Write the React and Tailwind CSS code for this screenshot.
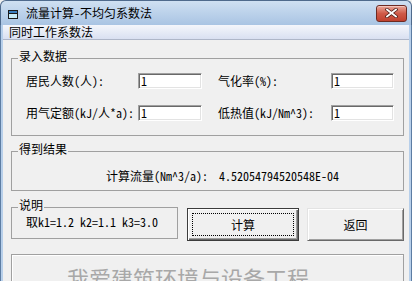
const FONT = "font-['Noto_Sans_Mono_CJK_SC','Noto_Sans_CJK_SC',monospace]"

function Field({ value }) {
  return (
    <div className="h-[16px] bg-white border border-t-[#a0a0a0] border-l-[#a0a0a0] border-b-white border-r-white shadow-[inset_1px_1px_0_#696969,inset_-1px_-1px_0_#e3e3e3] pl-[2px] text-[12px] leading-[14px] text-black">
      {value}
    </div>
  )
}

function Group({ title, className = '', children }) {
  return (
    <fieldset className={`border border-[#a0a0a0] ${className}`}>
      <legend className="ml-[6px] px-[1px] text-[12px] leading-[12px] text-black">
        <span className="relative -top-[2px]">{title}</span>
      </legend>
      {children}
    </fieldset>
  )
}

function TitleIcon() {
  return (
    <svg width="10" height="9" viewBox="0 0 10 9">
      <rect x="0.5" y="0.5" width="9" height="8" fill="#c8ecf8" stroke="#1a1a1a" />
      <rect x="1" y="1" width="8" height="2" fill="#3a7fc0" />
      <path d="M0.5 3.5 H9.5" stroke="#1a1a1a" />
    </svg>
  )
}

export default function App() {
  return (
    <div className={`w-[412px] h-[281px] overflow-hidden bg-[#f0f0f0] ${FONT}`}>
      {/* 标题栏 */}
      <div className="h-[25px] flex items-center rounded-t-[6px] border border-b-0 border-[#4f6a8c] bg-gradient-to-b from-[#cfe0f2] to-[#a9c4e3]">
        <div className="ml-[7px] mt-[2px]"><TitleIcon /></div>
        <span className="ml-[8px] text-[12px] leading-[14px] text-black">流量计算-不均匀系数法</span>
        <div className="ml-auto mr-[4px] w-[31px] h-[17px] rounded-[3px] border border-[#6e2a22] bg-gradient-to-b from-[#e9a699] via-[#cf5a48] to-[#c0412f] flex items-center justify-center shadow-[inset_0_1px_0_#f3c6bd]">
          <svg width="13" height="10" viewBox="0 0 13 10">
            <path d="M2 1.5 L11 8.5 M11 1.5 L2 8.5" stroke="#4a1a14" strokeWidth="3.4" strokeLinecap="square" />
            <path d="M2 1.5 L11 8.5 M11 1.5 L2 8.5" stroke="#ffffff" strokeWidth="1.8" strokeLinecap="square" />
          </svg>
        </div>
      </div>

      <div className="flex h-[256px]">
        <div className="w-[4px] bg-[#b7cfea] border-l border-[#5d7da3]" />

        <div className="flex-1 flex flex-col">
          {/* 菜单 */}
          <div className="h-[19px] flex items-center bg-gradient-to-b from-[#f4f6fb] to-[#d9e0f1] border-b border-[#aeb6c8]">
            <span className="ml-[6px] text-[12px] leading-[14px] text-black">同时工作系数法</span>
          </div>

          <div className="pl-[8px] pr-[5px] pt-[12px]">
            <Group title="录入数据">
              <div className="pl-[14px] pt-[9px] pb-[14px] grid grid-cols-[112px_64px_16px_113px_63px] gap-y-[16px] items-center text-[12px] leading-[14px] text-black">
                <span>居民人数(人):</span>
                <Field value="1" />
                <span />
                <span>气化率(%):</span>
                <Field value="1" />
                <span>用气定额(kJ/人*a):</span>
                <Field value="1" />
                <span />
                <span>低热值(kJ/Nm^3):</span>
                <Field value="1" />
              </div>
            </Group>

            <Group title="得到结果" className="mt-[9px]">
              <div className="pl-[94px] pt-[12px] pb-[7px] flex gap-[11px] text-[12px] leading-[14px] text-black">
                <span>计算流量(Nm^3/a):</span>
                <span>4.52054794520548E-04</span>
              </div>
            </Group>

            <div className="mt-[10px] flex items-start">
              <Group title="说明" className="w-[167px] h-[38px]">
                <div className="pl-[14px] pt-[2px] text-[12px] leading-[14px] text-black">取k1=1.2 k2=1.1 k3=3.0</div>
              </Group>

              <button className="ml-[9px] mt-[7px] w-[112px] h-[33px] border border-[#3c3c3c] bg-[#f0f0f0] shadow-[inset_1px_1px_0_#ffffff,inset_-1px_-1px_0_#696969,inset_-2px_-2px_0_#a0a0a0] p-[4px]">
                <div className="w-full h-full border border-dotted border-black flex items-center justify-center text-[12px] leading-[14px] text-black">
                  计算
                </div>
              </button>

              <button className="ml-[8px] mt-[7px] w-[97px] h-[33px] border border-t-[#e3e3e3] border-l-[#e3e3e3] border-b-[#696969] border-r-[#696969] bg-[#f0f0f0] shadow-[inset_1px_1px_0_#ffffff,inset_-1px_-1px_0_#a0a0a0] flex items-center justify-center text-[12px] leading-[14px] text-black">
                返回
              </button>
            </div>

            <div className="mt-[13px] h-[40px] border border-[#a0a0a0] shadow-[inset_1px_1px_0_#ffffff] pl-[55px] pt-[10px]">
              <span className="text-[22px] leading-[24px] text-[#a8a8a8]">我爱建筑环境与设备工程</span>
            </div>
          </div>
        </div>

        <div className="w-[4px] bg-[#b7cfea] border-r border-[#5d7da3]" />
      </div>
    </div>
  )
}
